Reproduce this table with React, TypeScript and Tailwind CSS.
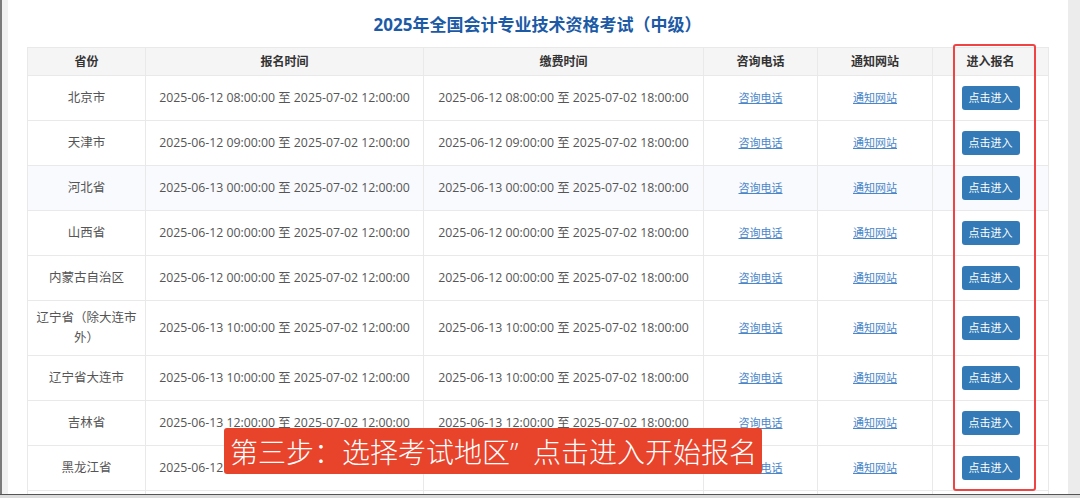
import React from 'react';

type Row = { name: string; reg: string; pay: string; tall?: boolean };

const rows: Row[] = [
  { name: '北京市', reg: '2025-06-12 08:00:00 至 2025-07-02 12:00:00', pay: '2025-06-12 08:00:00 至 2025-07-02 18:00:00' },
  { name: '天津市', reg: '2025-06-12 09:00:00 至 2025-07-02 12:00:00', pay: '2025-06-12 09:00:00 至 2025-07-02 18:00:00' },
  { name: '河北省', reg: '2025-06-13 00:00:00 至 2025-07-02 12:00:00', pay: '2025-06-13 00:00:00 至 2025-07-02 18:00:00' },
  { name: '山西省', reg: '2025-06-12 00:00:00 至 2025-07-02 12:00:00', pay: '2025-06-12 00:00:00 至 2025-07-02 18:00:00' },
  { name: '内蒙古自治区', reg: '2025-06-12 00:00:00 至 2025-07-02 12:00:00', pay: '2025-06-12 00:00:00 至 2025-07-02 18:00:00' },
  { name: '辽宁省（除大连市外）', reg: '2025-06-13 10:00:00 至 2025-07-02 12:00:00', pay: '2025-06-13 10:00:00 至 2025-07-02 18:00:00', tall: true },
  { name: '辽宁省大连市', reg: '2025-06-13 10:00:00 至 2025-07-02 12:00:00', pay: '2025-06-13 10:00:00 至 2025-07-02 18:00:00' },
  { name: '吉林省', reg: '2025-06-13 12:00:00 至 2025-07-02 12:00:00', pay: '2025-06-13 12:00:00 至 2025-07-02 18:00:00' },
  { name: '黑龙江省', reg: '2025-06-12 08:00:00 至 2025-07-02 12:00:00', pay: '2025-06-12 08:00:00 至 2025-07-02 18:00:00' },
  { name: '上海市', reg: '2025-06-12 08:00:00 至 2025-07-02 12:00:00', pay: '2025-06-12 08:00:00 至 2025-07-02 18:00:00' },
];

const cell = 'border border-[#e9e9e9] text-center align-middle';

const App: React.FC = () => {
  return (
    <div
      className="w-[1080px] h-[498px] overflow-hidden flex flex-col bg-white"
      style={{ fontFamily: '"Open Sans", "Noto Sans CJK SC", sans-serif' }}
    >
      <div className="flex h-[494px]">
        {/* window frame left */}
        <div className="w-[2px] bg-[#7b7b7b]" />
        <div className="w-[6px] bg-[#f1f1f1]" />

        <div className="relative flex-1 bg-white pl-[19px] pr-[20px] overflow-hidden">
          <h1 className="h-[47px] pt-[13px] text-center text-[17px] leading-[24px] font-bold text-[#1c5aa6]">
            2025年全国会计专业技术资格考试（中级）
          </h1>

          <table className="w-[1021px] table-fixed border-collapse text-[12.3px] text-[#555]">
            <colgroup>
              <col className="w-[118px]" />
              <col className="w-[278px]" />
              <col className="w-[280px]" />
              <col className="w-[114px]" />
              <col className="w-[115px]" />
              <col className="w-[116px]" />
            </colgroup>
            <thead>
              <tr className="h-[28px] bg-[#f5f5f5] text-[#333] font-bold text-[12px]">
                <th className={cell}>省份</th>
                <th className={cell}>报名时间</th>
                <th className={cell}>缴费时间</th>
                <th className={cell}>咨询电话</th>
                <th className={cell}>通知网站</th>
                <th className={cell}>进入报名</th>
              </tr>
            </thead>
            <tbody>
              {rows.map((r, i) => (
                <tr key={r.name} className={`${r.tall ? 'h-[55px]' : 'h-[45px]'} ${i === 2 ? 'bg-[#f9fafd]' : 'bg-white'}`}>
                  <td className={`${cell} px-[6px] text-[12.5px] leading-[20px]`}>{r.name}</td>
                  <td className={cell}>{r.reg}</td>
                  <td className={cell}>{r.pay}</td>
                  <td className={cell}>
                    <a className="text-[11px] text-[#4a86c8] underline">咨询电话</a>
                  </td>
                  <td className={cell}>
                    <a className="text-[11px] text-[#4a86c8] underline">通知网站</a>
                  </td>
                  <td className={cell}>
                    <button className="w-[58px] h-[24px] rounded-[3px] bg-[#337ab7] text-white text-[11px]">
                      点击进入
                    </button>
                  </td>
                </tr>
              ))}
            </tbody>
          </table>

          {/* highlight around the register column */}
          <div className="absolute left-[945px] top-[44px] w-[83px] h-[447px] border-2 border-[#f04343] rounded-[3px]" />

          {/* caption */}
          <div className="absolute left-[216px] top-[428px] w-[538px] h-[46px] bg-[#e8432b] rounded-[3px] pl-[6px] text-white text-[28px] leading-[48px] font-light whitespace-nowrap">
            第三步：选择考试地区”&nbsp;&nbsp;点击进入开始报名
          </div>
        </div>

        {/* window frame right */}
        <div className="w-[12px] bg-[#ececec]" />
      </div>
      <div className="h-[1px] bg-[#555]" />
      <div className="flex-1 bg-[#dcdcdc]" />
    </div>
  );
};

export default App;
